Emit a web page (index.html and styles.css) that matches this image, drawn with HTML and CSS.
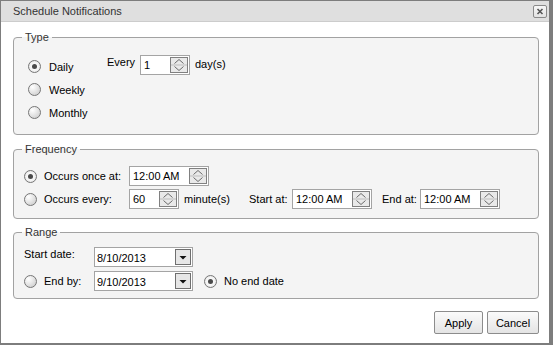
FILE: index.html
```html
<!DOCTYPE html>
<html>
<head>
<meta charset="utf-8">
<title>Schedule Notifications</title>
<link rel="stylesheet" href="styles.css">
</head>
<body>
<div class="dialog">
  <div class="titlebar">
    <span class="title">Schedule Notifications</span>
    <span class="close">
      <svg width="12" height="11" viewBox="0 0 12 11"><path d="M3.5 3 L8.5 8 M8.5 3 L3.5 8" stroke="#555" stroke-width="1.6" fill="none"/></svg>
    </span>
  </div>
  <div class="content">
    <fieldset class="group type">
      <legend>Type</legend>
      <div class="type-body">
        <div class="radios">
          <div class="opt"><span class="radio on"></span><span>Daily</span></div>
          <div class="opt"><span class="radio"></span><span>Weekly</span></div>
          <div class="opt"><span class="radio"></span><span>Monthly</span></div>
        </div>
        <div class="every">
          <span class="lbl-every">Every</span>
          <span class="spin-input w50"><span class="val">1</span>
            <svg class="spinner" width="18" height="16" viewBox="0 0 18 16"><rect x="0.5" y="0.5" width="17" height="15" fill="#e9e9e9" stroke="#808080"/><line x1="1" y1="8" x2="17" y2="8" stroke="#bdbdbd"/><path d="M4.5 6.5 L9 2.5 L13.5 6.5" fill="none" stroke="#6a6a6a"/><path d="M4.5 9.5 L9 13.5 L13.5 9.5" fill="none" stroke="#6a6a6a"/></svg>
          </span>
          <span class="lbl-days">day(s)</span>
        </div>
      </div>
    </fieldset>

    <fieldset class="group frequency">
      <legend>Frequency</legend>
      <div class="freq-body">
        <div class="row">
          <span class="radio on"></span><span class="lbl-occ">Occurs once at:</span>
          <span class="spin-input w80"><span class="val">12:00 AM</span>
            <svg class="spinner" width="18" height="16" viewBox="0 0 18 16"><rect x="0.5" y="0.5" width="17" height="15" fill="#e9e9e9" stroke="#808080"/><line x1="1" y1="8" x2="17" y2="8" stroke="#bdbdbd"/><path d="M4.5 6.5 L9 2.5 L13.5 6.5" fill="none" stroke="#6a6a6a"/><path d="M4.5 9.5 L9 13.5 L13.5 9.5" fill="none" stroke="#6a6a6a"/></svg>
          </span>
        </div>
        <div class="row">
          <span class="radio"></span><span class="lbl-occ">Occurs every:</span>
          <span class="spin-input w50"><span class="val">60</span>
            <svg class="spinner" width="18" height="16" viewBox="0 0 18 16"><rect x="0.5" y="0.5" width="17" height="15" fill="#e9e9e9" stroke="#808080"/><line x1="1" y1="8" x2="17" y2="8" stroke="#bdbdbd"/><path d="M4.5 6.5 L9 2.5 L13.5 6.5" fill="none" stroke="#6a6a6a"/><path d="M4.5 9.5 L9 13.5 L13.5 9.5" fill="none" stroke="#6a6a6a"/></svg>
          </span>
          <span class="lbl-min">minute(s)</span>
          <span class="lbl-start">Start at:</span>
          <span class="spin-input w80"><span class="val">12:00 AM</span>
            <svg class="spinner" width="18" height="16" viewBox="0 0 18 16"><rect x="0.5" y="0.5" width="17" height="15" fill="#e9e9e9" stroke="#808080"/><line x1="1" y1="8" x2="17" y2="8" stroke="#bdbdbd"/><path d="M4.5 6.5 L9 2.5 L13.5 6.5" fill="none" stroke="#6a6a6a"/><path d="M4.5 9.5 L9 13.5 L13.5 9.5" fill="none" stroke="#6a6a6a"/></svg>
          </span>
          <span class="lbl-end">End at:</span>
          <span class="spin-input w80"><span class="val">12:00 AM</span>
            <svg class="spinner" width="18" height="16" viewBox="0 0 18 16"><rect x="0.5" y="0.5" width="17" height="15" fill="#e9e9e9" stroke="#808080"/><line x1="1" y1="8" x2="17" y2="8" stroke="#bdbdbd"/><path d="M4.5 6.5 L9 2.5 L13.5 6.5" fill="none" stroke="#6a6a6a"/><path d="M4.5 9.5 L9 13.5 L13.5 9.5" fill="none" stroke="#6a6a6a"/></svg>
          </span>
        </div>
      </div>
    </fieldset>

    <fieldset class="group range">
      <legend>Range</legend>
      <div class="range-body">
        <div class="row">
          <span class="lbl-startdate">Start date:</span>
          <span class="select"><span class="val">8/10/2013</span>
            <svg class="drop" width="16" height="16" viewBox="0 0 16 16"><rect x="0.5" y="0.5" width="15" height="15" fill="#e6e6e6" stroke="#6f6f6f"/><path d="M4.5 7 L11.5 7 L8 10.5 Z" fill="#111"/></svg>
          </span>
        </div>
        <div class="row">
          <span class="radio"></span><span class="lbl-endby">End by:</span>
          <span class="select"><span class="val">9/10/2013</span>
            <svg class="drop" width="16" height="16" viewBox="0 0 16 16"><rect x="0.5" y="0.5" width="15" height="15" fill="#e6e6e6" stroke="#6f6f6f"/><path d="M4.5 7 L11.5 7 L8 10.5 Z" fill="#111"/></svg>
          </span>
          <span class="radio on noend"></span><span>No end date</span>
        </div>
      </div>
    </fieldset>
  </div>
  <div class="footer">
    <button class="btn btn-apply">Apply</button>
    <button class="btn btn-cancel">Cancel</button>
  </div>
</div>
</body>
</html>
```

FILE: styles.css
```css
html, body {
  margin: 0;
  padding: 0;
  background: #ffffff;
}

body {
  font-family: "Liberation Sans", Arial, sans-serif;
  font-size: 11px;
  color: #000;
}

.dialog {
  width: 553px;
  height: 345px;
  box-sizing: border-box;
  border: 1px solid #7d7d7d;
  border-right-width: 4px;
  border-bottom-width: 2px;
  background: #ffffff;
  display: flex;
  flex-direction: column;
}

.titlebar {
  height: 21px;
  box-sizing: border-box;
  border-bottom: 1px solid #cccccc;
  background: #dfdfdf;
  display: flex;
  align-items: center;
  padding: 0 2px 0 12px;
}

.title {
  color: #333;
  font-size: 11px;
}

.close {
  margin-left: auto;
  width: 14px;
  height: 13px;
  box-sizing: border-box;
  border: 1px solid #8a8a8a;
  border-radius: 2px;
  background: linear-gradient(#f7f7f7, #e2e2e2);
  display: flex;
  align-items: center;
  justify-content: center;
}

.close svg {
  display: block;
}

.content {
  padding: 0 10px 0 12px;
  display: flex;
  flex-direction: column;
}

.group {
  margin: 0;
  padding: 0;
  min-width: 0;
  border: 1px solid #a2a2a2;
  border-radius: 4px;
  background: #f4f4f4;
}

.group legend {
  margin-left: 8px;
  padding: 0 3px;
  line-height: 14px;
  font-size: 11px;
  color: #333;
}

.type { margin-top: 8px; }
.frequency { margin-top: 7px; }
.range { margin-top: 6px; }

.type-body {
  display: flex;
  align-items: flex-start;
  padding: 11px 0 10px 14px;
}

.radios {
  width: 79px;
  display: flex;
  flex-direction: column;
}

.opt {
  height: 23px;
  display: flex;
  align-items: center;
}

.radio {
  width: 13px;
  height: 13px;
  box-sizing: border-box;
  border: 1px solid #767676;
  border-radius: 50%;
  background: radial-gradient(circle at 32% 28%, #ffffff 0%, #ececec 35%, #c6c6c6 100%);
  margin-right: 7px;
  flex: none;
  display: flex;
  align-items: center;
  justify-content: center;
}

.opt .radio {
  margin-right: 8px;
}

.radio.on {
  background: radial-gradient(circle at 50% 50%, #ffffff 0%, #f4f4f4 55%, #d6d6d6 100%);
}

.radio.on::after {
  content: "";
  width: 5px;
  height: 5px;
  border-radius: 50%;
  background: #4a4a4a;
}

.every {
  display: flex;
  align-items: center;
  height: 20px;
}

.lbl-every {
  width: 33px;
  margin-bottom: 6px;
}

.lbl-days {
  margin-left: 5px;
  margin-bottom: 2px;
}

.spin-input {
  height: 20px;
  box-sizing: border-box;
  border: 1px solid #a4a4a4;
  background: #ffffff;
  display: flex;
  align-items: center;
  padding: 0 1px 0 3px;
  flex: none;
}

.spin-input .val {
  flex: 1;
}

.spinner {
  display: block;
  flex: none;
}

.w50 { width: 50px; }
.w80 { width: 80px; }

.freq-body {
  padding: 10px 0 9px 10px;
  display: flex;
  flex-direction: column;
  gap: 3px;
}

.row {
  height: 20px;
  display: flex;
  align-items: center;
}

.lbl-occ { width: 85px; }
.lbl-min { margin-left: 5px; width: 65px; }
.lbl-start { width: 43px; }
.lbl-end { margin-left: 10px; width: 38px; }

.range-body {
  padding: 8px 0 7px 10px;
  display: flex;
  flex-direction: column;
  gap: 4px;
}

.lbl-startdate {
  width: 70px;
  margin-bottom: 6px;
}

.lbl-endby { width: 50px; }

.select {
  width: 99px;
  height: 20px;
  box-sizing: border-box;
  border: 1px solid #a4a4a4;
  background: #ffffff;
  display: flex;
  align-items: center;
  padding: 0 1px 0 2px;
  flex: none;
}

.select .val {
  flex: 1;
  padding-top: 2px;
}

.drop {
  display: block;
  flex: none;
}

.radio.noend {
  margin-left: 11px;
}

.footer {
  display: flex;
  justify-content: flex-end;
  gap: 4px;
  padding: 12px 10px 0 0;
}

.btn {
  height: 23px;
  box-sizing: border-box;
  border: 1px solid #8c8c8c;
  border-radius: 2px;
  background: linear-gradient(#fbfbfb, #e4e4e4);
  font-family: "Liberation Sans", Arial, sans-serif;
  font-size: 11px;
  color: #000;
  padding: 0;
  margin: 0;
}

.btn-apply { width: 49px; }
.btn-cancel { width: 52px; }
```
